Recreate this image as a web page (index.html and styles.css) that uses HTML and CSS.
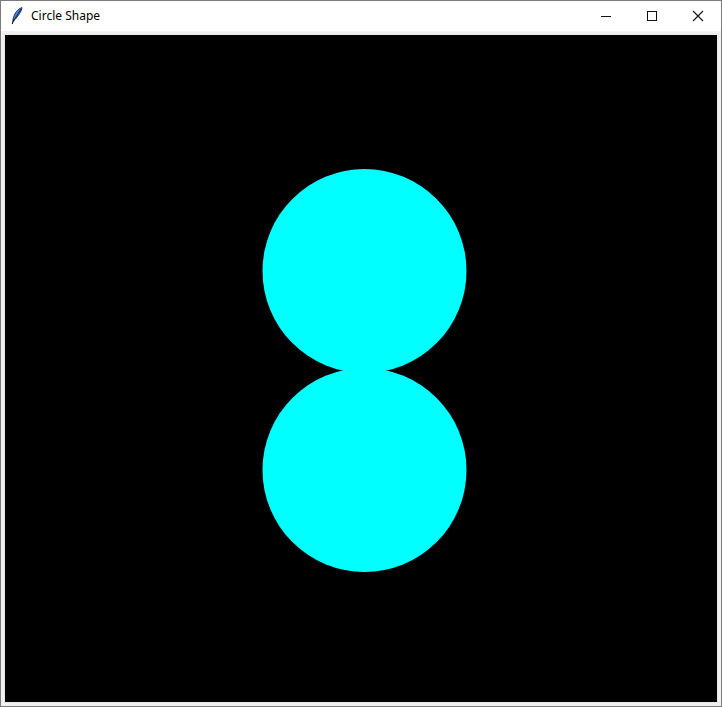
FILE: index.html
```html
<!DOCTYPE html>
<html>
<head>
<meta charset="utf-8">
<title>Circle Shape</title>
<link rel="stylesheet" href="styles.css">
</head>
<body>
<div class="window">
  <div class="titlebar">
    <div class="title-left">
      <svg class="app-icon" width="12" height="18" viewBox="0 0 12 18">
        <path d="M11 0.6 C7 1.8 3.4 6 2.2 11.5 L1.9 14.6 C4.8 12 8 8 10.3 3.5 Z" fill="#4a7fe0" stroke="#1a2a55" stroke-width="0.9"/>
        <path d="M10.2 1.8 L2.6 13.8" stroke="#0e1a3a" stroke-width="0.9"/>
        <path d="M2.8 12.5 L1.2 17" stroke="#111" stroke-width="1.1"/>
      </svg>
      <span class="title-text">Circle Shape</span>
    </div>
    <div class="controls">
      <div class="ctl">
        <svg width="12" height="12" viewBox="0 0 12 12"><path d="M1 6.5 H11" stroke="#111" stroke-width="1"/></svg>
      </div>
      <div class="ctl">
        <svg width="12" height="12" viewBox="0 0 12 12"><rect x="1.5" y="1.5" width="9" height="9" fill="none" stroke="#111" stroke-width="1"/></svg>
      </div>
      <div class="ctl">
        <svg width="12" height="12" viewBox="0 0 12 12"><path d="M1 1 L11 11 M11 1 L1 11" stroke="#111" stroke-width="1.1"/></svg>
      </div>
    </div>
  </div>
  <div class="client">
    <div class="canvas-frame">
      <svg class="canvas" width="712" height="667" viewBox="0 0 712 667">
        <rect width="712" height="667" fill="#000"/>
        <circle cx="359.5" cy="236" r="102" fill="#00ffff"/>
        <circle cx="359.5" cy="435" r="102" fill="#00ffff"/>
      </svg>
    </div>
  </div>
</div>
</body>
</html>
```

FILE: styles.css
```css
html, body {
  margin: 0;
  padding: 0;
  background: #ffffff;
}
.window {
  width: 722px;
  height: 707px;
  box-sizing: border-box;
  border: 1px solid #7a7a7a;
  display: flex;
  flex-direction: column;
  background: #f0f0f0;
}
.titlebar {
  height: 30px;
  background: #ffffff;
  display: flex;
  align-items: center;
  justify-content: space-between;
  flex-shrink: 0;
}
.title-left {
  display: flex;
  align-items: center;
  padding-left: 10px;
}
.app-icon {
  display: block;
  margin-top: -1px;
}
.title-text {
  margin-left: 8px;
  font-family: "Noto Sans", "Liberation Sans", sans-serif;
  font-size: 12px;
  color: #000;
  margin-top: -1px;
}
.controls {
  display: flex;
  height: 30px;
}
.ctl {
  width: 46px;
  height: 30px;
  display: flex;
  align-items: center;
  justify-content: center;
}
.ctl svg {
  display: block;
}
.client {
  flex: 1;
  padding: 3px;
  display: flex;
}
.canvas-frame {
  flex: 1;
  border: 1px solid #e8e8e8;
  display: flex;
}
.canvas {
  display: block;
}
```
